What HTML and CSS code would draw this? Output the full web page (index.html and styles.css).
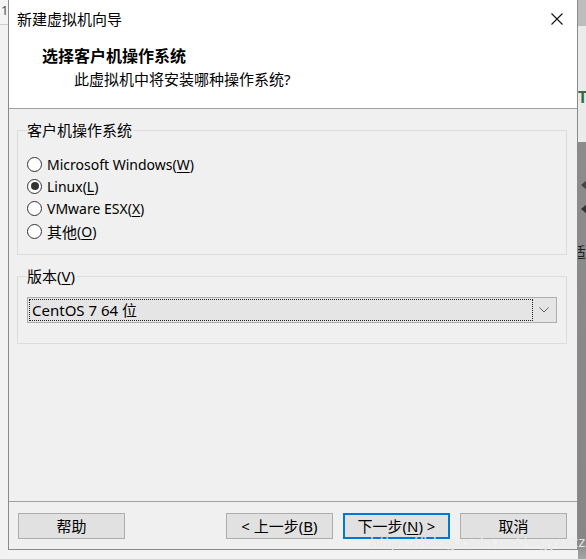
FILE: index.html
```html
<!DOCTYPE html>
<html lang="zh-CN">
<head>
<meta charset="utf-8">
<title>新建虚拟机向导</title>
<link rel="stylesheet" href="styles.css">
</head>
<body>
<div class="screen">
  <div class="strip-left"><span class="strip-glyph">1</span></div>
  <div class="column">
    <div class="dialog">
      <div class="titlebar">
        <span class="title">新建虚拟机向导</span>
        <span class="close" aria-label="关闭">
          <svg width="12" height="12" viewBox="0 0 12 12"><path d="M0.5 0.5 L11.5 11.5 M11.5 0.5 L0.5 11.5" stroke="#111" stroke-width="1.1" fill="none"/></svg>
        </span>
      </div>
      <div class="header">
        <div class="heading">选择客户机操作系统</div>
        <div class="subheading">此虚拟机中将安装哪种操作系统?</div>
      </div>
      <div class="body">
        <fieldset class="group group-os">
          <legend>客户机操作系统</legend>
          <div class="radios">
            <label class="radio"><span class="dot"></span>Microsoft Windows(<u>W</u>)</label>
            <label class="radio checked"><span class="dot"></span>Linux(<u>L</u>)</label>
            <label class="radio"><span class="dot"></span>VMware ESX(<u>X</u>)</label>
            <label class="radio"><span class="dot"></span><span class="cjk">其他</span>(<u>O</u>)</label>
          </div>
        </fieldset>
        <fieldset class="group group-ver">
          <legend>版本(<u>V</u>)</legend>
          <div class="combo">
            <span class="combo-value">CentOS 7 64 位</span>
            <span class="combo-arrow">
              <svg width="10" height="6" viewBox="0 0 10 6"><path d="M0.5 0.5 L5 5 L9.5 0.5" stroke="#606060" stroke-width="1" fill="none"/></svg>
            </span>
          </div>
        </fieldset>
        <div class="spacer"></div>
      </div>
      <div class="footer">
        <button class="btn">帮助</button>
        <div class="nav">
          <button class="btn">&lt; 上一步(<u>B</u>)</button>
          <button class="btn default">下一步(<u>N</u>) &gt;</button>
          <button class="btn cancel">取消</button>
        </div>
      </div>
    </div>
    <div class="below"></div>
  </div>
  <div class="strip-right">
    <span class="r-t">T</span>
    <span class="r-arrow a1"></span>
    <span class="r-arrow a2"></span>
    <span class="r-char">适</span>
  </div>
</div>
<span class="watermark">https://blog.csdn.net/wgyzzzz</span>
</body>
</html>
```
FILE: styles.css
```css
html, body {
  margin: 0;
  padding: 0;
}
body {
  width: 586px;
  height: 559px;
  overflow: hidden;
  position: relative;
  font-family: "Noto Sans", "Noto Sans CJK SC", sans-serif;
  font-size: 14px;
  color: #000;
  background: #f0f0f0;
}
u { text-decoration: underline; text-underline-offset: 2px; }
.cjk { font-size: 15px; }

.screen {
  display: flex;
  height: 559px;
}
.strip-left {
  width: 8px;
  flex: none;
  background: linear-gradient(#f4f4f4 0, #f4f4f4 24px, #cfcfcf 24px, #cfcfcf 25px, #f2f2f2 25px);
  overflow: hidden;
  position: relative;
}
.strip-glyph {
  position: absolute;
  left: 1px;
  top: 0px;
  font-size: 13px;
  color: #555;
  line-height: 20px;
}
.column {
  width: 570px;
  flex: none;
  display: flex;
  flex-direction: column;
}
.dialog {
  height: 550px;
  box-sizing: border-box;
  border-left: 1px solid #8a8a8a;
  border-right: 1px solid #8a8a8a;
  border-bottom: 1px solid #8a8a8a;
  background: #f0f0f0;
  display: flex;
  flex-direction: column;
  box-shadow: 1px 1px 4px rgba(0,0,0,0.25);
}
.below {
  flex: 1;
  background: #f3f3f3;
}
.strip-right {
  width: 8px;
  flex: none;
  position: relative;
  overflow: hidden;
  background: linear-gradient(#bdbdbd 0, #bdbdbd 26px, #e9ecea 26px, #e9ecea 142px, #8c8c8c 142px, #868686 540px, #a5a5a5 559px);
}
.r-t {
  position: absolute;
  left: 0;
  top: 86px;
  font-size: 16px;
  color: #2e6e4c;
  font-weight: bold;
}
.r-arrow {
  position: absolute;
  left: 3px;
  width: 0;
  height: 0;
  border-top: 5px solid transparent;
  border-bottom: 5px solid transparent;
  border-right: 6px solid #333;
}
.r-arrow.a1 { top: 180px; border-right-color: #444; }
.r-arrow.a2 { top: 204px; }
.r-char {
  position: absolute;
  left: -7px;
  top: 241px;
  font-size: 15px;
  color: #222;
}

/* title bar */
.titlebar {
  height: 38px;
  flex: none;
  background: #fff;
  display: flex;
  align-items: center;
  justify-content: space-between;
  padding: 0 14px 0 8px;
}
.title {
  font-size: 15px;
  line-height: 20px;
}
.close {
  display: flex;
  width: 12px;
  height: 12px;
}

/* header */
.header {
  height: 71px;
  flex: none;
  background: #fff;
  border-bottom: 1px solid #a0a0a0;
  padding-left: 33px;
  box-sizing: border-box;
  padding-top: 8px;
}
.heading {
  font-weight: bold;
  font-size: 16px;
  line-height: 20px;
}
.subheading {
  padding-left: 32px;
  font-size: 15px;
  line-height: 20px;
  margin-top: 3px;
}

/* body */
.body {
  flex: 1;
  display: flex;
  flex-direction: column;
  padding: 12px 10px 0 8px;
}
.group {
  margin: 0;
  border: 1px solid #dcdcdc;
  padding: 0 9px;
  min-width: 0;
}
.group legend {
  padding: 0 2px 0 0;
  margin-left: 0;
  font-size: 15px;
  line-height: 18px;
}
.group-os {
  height: 134px;
  box-sizing: border-box;
}
.radios {
  display: flex;
  flex-direction: column;
  padding-top: 15px;
  gap: 2.4px;
}
.radio {
  display: flex;
  align-items: center;
  height: 20px;
  font-size: 14px;
}
.dot {
  width: 15px;
  height: 15px;
  border: 1px solid #333;
  border-radius: 50%;
  background: #fff;
  box-sizing: border-box;
  margin-right: 5px;
  display: flex;
  align-items: center;
  justify-content: center;
}
.radio.checked .dot::after {
  content: "";
  width: 8px;
  height: 8px;
  border-radius: 50%;
  background: #333;
}

.group-ver {
  margin-top: 12px;
  height: 77px;
  box-sizing: border-box;
  padding-top: 12px;
}
.combo {
  height: 26px;
  box-sizing: border-box;
  border: 1px solid #adadad;
  background: #e5e5e5;
  display: flex;
  align-items: center;
  padding: 1px;
}
.combo-value {
  flex: 1;
  height: 22px;
  box-sizing: border-box;
  border: 1px dotted #222;
  padding-left: 2px;
  font-size: 15px;
  line-height: 21px;
}
.combo-arrow {
  width: 22px;
  display: flex;
  justify-content: center;
  padding-left: 0;
}
.spacer { flex: 1; }

/* footer */
.footer {
  height: 48px;
  flex: none;
  border-top: 1px solid #a0a0a0;
  box-sizing: border-box;
  display: flex;
  justify-content: space-between;
  align-items: flex-start;
  padding: 11px 10px 0 9px;
}
.nav {
  display: flex;
  gap: 10px;
}
.btn {
  width: 107px;
  height: 26px;
  box-sizing: border-box;
  border: 1px solid #adadad;
  background: #e1e1e1;
  font-family: "Noto Sans", "Noto Sans CJK SC", sans-serif;
  font-size: 15px;
  color: #000;
  padding: 0;
  line-height: 20px;
}
.btn.default {
  border: 2px solid #0078d7;
}

.watermark {
  position: absolute;
  left: 370px;
  top: 531px;
  font-family: "Noto Sans", sans-serif;
  font-size: 15px;
  color: rgba(255,255,255,0.7);
  text-shadow: 0 0 1px rgba(180,180,180,0.6);
  letter-spacing: 0.2px;
}
```
